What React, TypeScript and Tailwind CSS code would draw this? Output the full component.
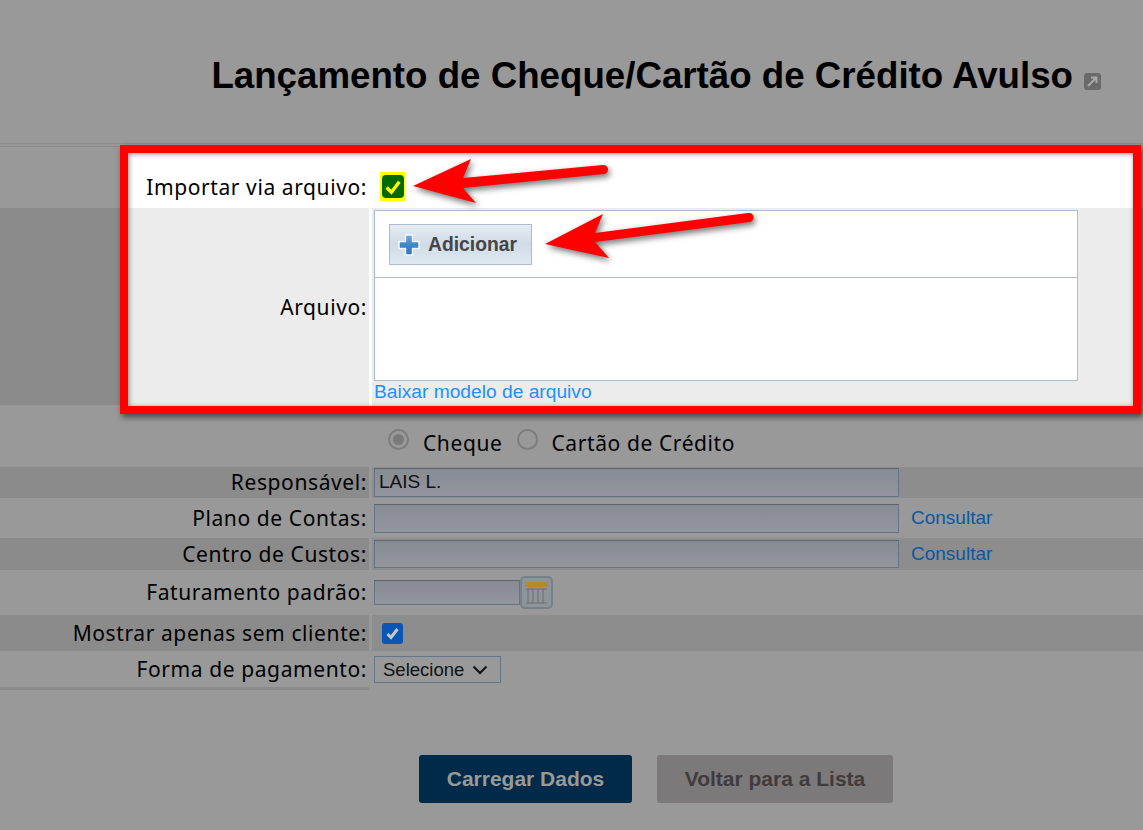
import React from 'react';

const labelCls = "text-[21px] tracking-[0.6px] text-black font-['Noto_Sans',sans-serif]";

function Row({ h, dark, label, children }: { h: string; dark?: boolean; label?: string; children?: React.ReactNode }) {
  return (
    <div className={`flex ${h}`}>
      <div className={`w-[369px] shrink-0 flex items-center justify-end pr-[2px] pt-[1px] ${dark ? 'bg-[#8b8b8b]' : ''}`}>
        {label && <span className={labelCls}>{label}</span>}
      </div>
      <div className={`flex-1 ml-[3px] pl-[2px] flex items-center ${dark ? 'bg-[#8d8d8d]' : ''}`}>{children}</div>
    </div>
  );
}

const Field = ({ w, h = 'h-[29px]', children }: { w: string; h?: string; children?: React.ReactNode }) => (
  <div className={`${w} ${h} border border-[#66748a] border-t-[#5d6570] bg-gradient-to-b from-[#878b92] to-[#93969e] pl-[4px] flex items-center text-[19px] text-[#111] font-['Liberation_Sans',sans-serif]`}>{children}</div>
);

const Link = ({ children }: { children: React.ReactNode }) => (
  <a className="ml-[12px] text-[19px] text-[#0b57a4] font-['Liberation_Sans',sans-serif]">{children}</a>
);

export default function App() {
  return (
    <div className="relative w-[1143px] h-[830px] overflow-hidden bg-[#999999]">
      <div className="h-[143px] flex items-start justify-end pr-[42px] pt-[53px]">
        <h1 className="text-[36.7px] leading-[46px] font-bold text-black font-['Liberation_Sans',sans-serif]">Lançamento de Cheque/Cartão de Crédito Avulso</h1>
        <svg width="17" height="17" viewBox="0 0 17 17" className="ml-[11px] mt-[20px]">
          <rect width="17" height="17" rx="3" fill="#6a6a6a" />
          <path d="M4 13 L12 5 M7 4.5 H12.5 V10" stroke="#a8a8a8" strokeWidth="2" fill="none" />
        </svg>
      </div>
      <div className="h-[4px] border-t border-b border-[#8c8c8c]" />
      <Row h="h-[61px]" />
      <Row h="h-[197px]" dark />
      <div className={`h-[62px] flex items-center pl-[388px] pt-[16px] ${labelCls}`}>
        <span className="mt-[-10px] w-[21px] h-[21px] rounded-full border-2 border-[#7d7d7d] flex items-center justify-center"><span className="w-[11px] h-[11px] rounded-full bg-[#7a7a7a]" /></span>
        <span className="ml-[14px]">Cheque</span>
        <span className="mt-[-10px] ml-[15px] w-[21px] h-[21px] rounded-full border-2 border-[#7d7d7d]" />
        <span className="ml-[13px]">Cartão de Crédito</span>
      </div>
      <Row h="h-[31px]" dark label="Responsável:"><Field w="w-[525px]">LAIS L.</Field></Row>
      <Row h="h-[40px]" label="Plano de Contas:"><Field w="w-[525px]" /><Link>Consultar</Link></Row>
      <Row h="h-[32px]" dark label="Centro de Custos:"><Field w="w-[525px]" h="h-[28px]" /><Link>Consultar</Link></Row>
      <Row h="h-[45px]" label="Faturamento padrão:">
        <Field w="w-[146px]" h="h-[25px]" />
        <svg width="33" height="33" viewBox="0 0 33 33">
          <rect x="1" y="1" width="31" height="31" rx="4" fill="#8e949c" stroke="#788089" strokeWidth="2" />
          <rect x="5" y="6" width="23" height="5" fill="#b08a2e" />
          <path d="M6 13 H27 M8 13 V27 M13 13 V27 M18 13 V27 M23 13 V27 M6 27 H27" stroke="#6c6c6c" strokeWidth="1" />
        </svg>
      </Row>
      <Row h="h-[36px]" dark label="Mostrar apenas sem cliente:">
        <span className="ml-[8px] w-[21px] h-[21px] rounded-[3px] bg-[#0a56b5] flex items-center justify-center">
          <svg width="15" height="15" viewBox="0 0 15 15"><path d="M2.5 8 L6 11.5 L12.5 3" stroke="#c9c9c9" strokeWidth="3" fill="none" /></svg>
        </span>
      </Row>
      <Row h="h-[36px]" label="Forma de pagamento:">
        <div className="mt-[1px] w-[127px] h-[27px] border border-[#66748a] flex items-center pl-[8px] gap-[8px] text-[18.5px] text-[#111] font-['Liberation_Sans',sans-serif]">
          Selecione
          <svg width="16" height="10" viewBox="0 0 16 10"><path d="M1.5 1.5 L8 8 L14.5 1.5" stroke="#111" strokeWidth="2" fill="none" /></svg>
        </div>
      </Row>
      <div className="h-[3px] w-[369px] bg-[#8c8c8c]" />
      <div className="flex pl-[419px] pt-[65px] gap-[25px]">
        <button className="w-[213px] h-[48px] rounded-[3px] bg-[#002a49] text-[21px] font-bold text-[#999] font-['Liberation_Sans',sans-serif]">Carregar Dados</button>
        <button className="w-[236px] h-[48px] rounded-[3px] bg-[#7b797a] text-[21px] font-bold text-[#403c3d] font-['Liberation_Sans',sans-serif]">Voltar para a Lista</button>
      </div>

      {/* Destaque: caixa vermelha sobre a página */}
      <div className="absolute left-[120px] top-[145px] w-[1021px] h-[269px] border-[8px] border-[#ff0000] shadow-[2px_3px_6px_rgba(0,0,0,0.55)] bg-white">
        <div className="h-[55px] flex">
          <div className="w-[241px] flex items-center justify-end pt-[15px] pr-[2px]"><span className={labelCls}>Importar via arquivo:</span></div>
          <div className="pl-[11px] pt-[19px]">
            <span className="w-[25px] h-[29px] bg-[#ffff00] flex items-center justify-center">
              <span className="w-[22px] h-[23px] rounded-[4px] bg-[#006a00] flex items-center justify-center">
                <svg width="18" height="18" viewBox="0 0 17 17"><path d="M2.5 9 L7 13.5 L14.5 3.5" stroke="#ffff00" strokeWidth="3.2" fill="none" /></svg>
              </span>
            </span>
          </div>
        </div>
        <div className="h-[198px] flex">
          <div className="w-[241px] shrink-0 bg-[#ececec] flex items-center justify-end pr-[2px] pt-[1px]"><span className={labelCls}>Arquivo:</span></div>
          <div className="ml-[3px] flex-1 bg-[#ececec] pl-[2px] pt-[2px]">
            <div className="w-[704px] h-[171px] bg-white border border-[#a9bdd4]">
              <div className="h-[67px] pl-[14px] pt-[13px] border-b border-[#b0bcc8]">
                <div className="w-[143px] h-[41px] border border-[#a9bcd2] bg-gradient-to-b from-[#e6edf3] via-[#cfdbe6] to-[#e0e9f1] flex items-center pl-[6px] gap-[6px]">
                  <svg width="26" height="26" viewBox="0 0 26 26">
                    <defs>
                      <linearGradient id="plus" x1="0" y1="0" x2="0" y2="1">
                        <stop offset="0" stopColor="#6ea8d8" />
                        <stop offset="0.5" stopColor="#3f87c6" />
                        <stop offset="1" stopColor="#2f78ba" />
                      </linearGradient>
                    </defs>
                    <path d="M9.5 3 H16.5 V9.5 H23 V16.5 H16.5 V23 H9.5 V16.5 H3 V9.5 H9.5 Z" fill="url(#plus)" stroke="#f4f8fb" strokeWidth="1.5" strokeLinejoin="round" />
                  </svg>
                  <span className="pt-[1px] text-[19.3px] font-bold text-[#454545] font-['Liberation_Sans',sans-serif]">Adicionar</span>
                </div>
              </div>
            </div>
            <a className="block text-[19.2px] leading-[21px] text-[#1e90ff] font-['Liberation_Sans',sans-serif]">Baixar modelo de arquivo</a>
          </div>
        </div>
        <div className="absolute inset-0 shadow-[inset_1px_1px_5px_rgba(0,0,0,0.45)] pointer-events-none" />
      </div>

      {/* Setas de anotação */}
      <svg className="absolute left-0 top-0 pointer-events-none" width="1143" height="830" style={{ filter: 'drop-shadow(2px 3px 3px rgba(0,0,0,0.55))' }}>
        <path d="M413 186 L471 159 L463 178 L603 165 A4.5 4.5 0 0 1 604 174 L463 188 L476 203 Z" fill="#ff0000" />
        <path d="M545 244 L603 214 L595 233 L748 213 A4.5 4.5 0 0 1 750 222 L595 242 L609 258 Z" fill="#ff0000" />
      </svg>
    </div>
  );
}
